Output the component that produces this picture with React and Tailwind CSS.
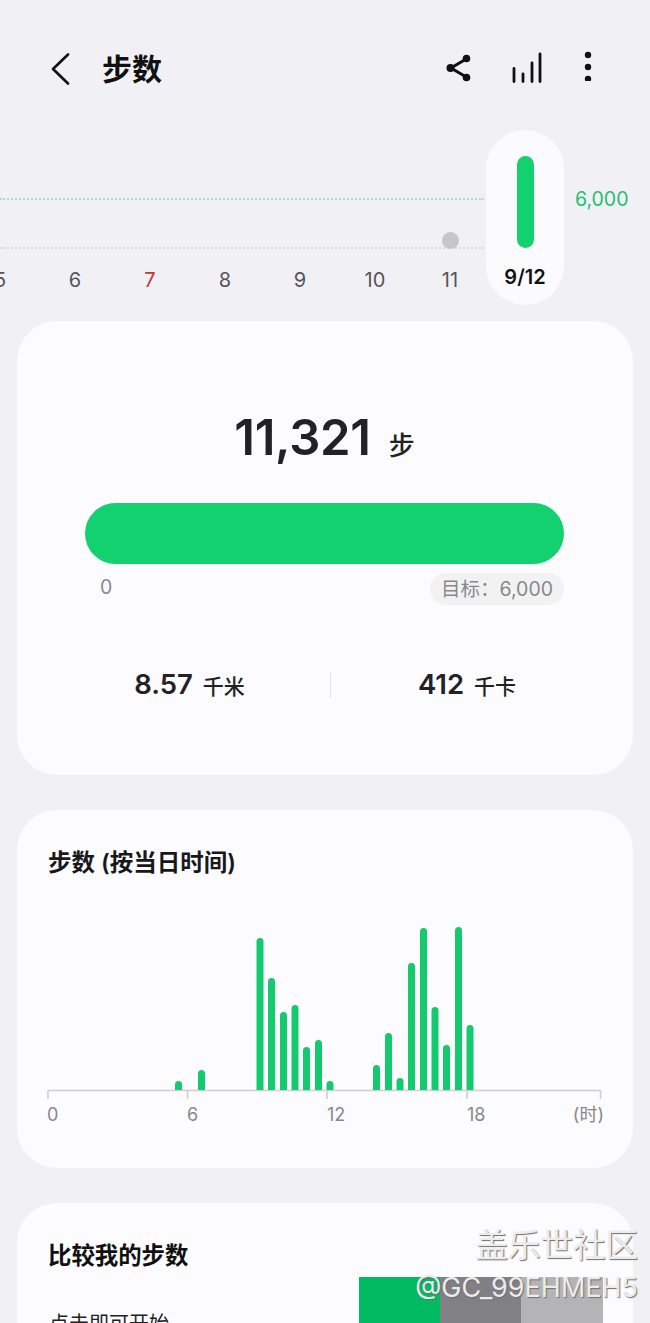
import React from "react";

const FONT = "font-['Inter','Noto_Sans_CJK_SC',sans-serif]";

// [center x, top y] in page pixels, baseline is y=1090
const BARS = [
  [178.5, 1081], [201.5, 1070], [260, 938], [271.5, 978], [283.5, 1012], [295, 1005],
  [306.5, 1047], [318.5, 1040], [330, 1081], [376.5, 1065], [388.5, 1033], [400, 1078],
  [411.5, 963], [423.5, 928], [435, 1007], [446.5, 1045], [458.5, 927], [470, 1025],
];

function Header() {
  return (
    <div className="flex h-[130px] items-start pl-[51px] pr-[58px] pt-[52px]">
      <svg width="19" height="32" viewBox="0 0 19 32" fill="none" className="mt-[1px]">
        <path d="M17 1.5 2 16l15 14.5" stroke="#111" strokeWidth="2.6" strokeLinecap="round" strokeLinejoin="round" />
      </svg>
      <div className="ml-[32px] mt-[-1px] text-[30px] leading-[36px] font-bold text-[#111]">步数</div>
      <div className="ml-auto flex items-start">
        <svg width="26" height="30" viewBox="0 0 26 30" fill="#111" stroke="#111" className="mt-[1px]">
          <path d="M21 5.5 5 15l16 9.5" fill="none" strokeWidth="3" />
          <circle cx="20.5" cy="5.5" r="3.8" stroke="none" />
          <circle cx="4.5" cy="15" r="4" stroke="none" />
          <circle cx="20.5" cy="24.5" r="3.8" stroke="none" />
        </svg>
        <svg width="31" height="32" viewBox="0 0 31 32" fill="none" stroke="#111" strokeWidth="2.8" strokeLinecap="round" className="ml-[39px]">
          <path d="M3 16.5v13M12 22v7.5M21 11v18.5M29 2v27.5" />
        </svg>
        <svg width="8" height="30" viewBox="0 0 8 30" fill="#111" className="ml-[42px] mt-[-1px]">
          <circle cx="4" cy="4" r="3.2" />
          <circle cx="4" cy="16" r="3.2" />
          <circle cx="4" cy="28" r="3.2" />
        </svg>
      </div>
    </div>
  );
}

function DayStrip() {
  const days = ["5", "6", "7", "8", "9", "10", "11"];
  return (
    <div className="relative flex h-[175px] items-end">
      <div className="absolute left-0 top-[68px] w-[484px] border-t-2 border-dotted border-[#a4e2c2]"></div>
      <div className="absolute left-0 top-[117px] w-[484px] border-t-2 border-dotted border-[#dcdce0]"></div>
      <div className="ml-[-37.5px] flex">
        {days.map((d) => (
          <div
            key={d}
            className={
              "relative w-[75px] pb-[13px] text-center text-[20px] leading-[24px] " +
              (d === "7" ? "text-[#c0392f]" : "text-[#55555a]")
            }
          >
            {d}
            {d === "11" && (
              <div className="absolute left-[29px] top-[-36px] h-[17px] w-[17px] rounded-full bg-[#c6c6ca]"></div>
            )}
          </div>
        ))}
      </div>
      <div className="ml-[-1.5px] flex h-[175px] w-[78px] flex-col items-center rounded-full bg-[#fbfbfe] pt-[26px]">
        <div className="h-[92px] w-[17px] rounded-full bg-[#13d16f]"></div>
        <div className="mt-[17px] text-[20px] leading-[24px] font-semibold text-[#111]">9/12</div>
      </div>
      <div className="ml-[11px] self-start pt-[57px] text-[19.5px] leading-[24px] text-[#1fbf72]">6,000</div>
    </div>
  );
}

function SummaryCard() {
  return (
    <div className="mx-[17px] mt-[16px] h-[454px] rounded-[40px] bg-[#fcfcff] pl-[68px] pr-[69px] pt-[88px]">
      <div className="flex items-baseline justify-center text-[#222226]">
        <span className="text-[49px] leading-[58px] font-semibold tracking-[-0.3px]">11,321</span>
        <span className="ml-[18px] text-[26px] font-medium">步</span>
      </div>
      <div className="mt-[36px] h-[61px] rounded-full bg-[#13d16f]"></div>
      <div className="mt-[9px] flex items-start justify-between text-[19.5px] text-[#88888c]">
        <span className="ml-[15px] mt-[2px] leading-[24px]">0</span>
        <span className="rounded-full bg-[#f2f2f3] px-[11px] py-[4px] leading-[24px]">目标：6,000</span>
      </div>
      <div className="mt-[62px] flex items-center text-[#222226]">
        <div className="flex w-[245px] items-baseline justify-center pr-[36px]">
          <span className="text-[27.5px] leading-[34px] font-semibold">8.57</span>
          <span className="ml-[10px] text-[21px] font-medium">千米</span>
        </div>
        <div className="h-[26px] w-px bg-[#e4e4e6]"></div>
        <div className="flex flex-1 items-baseline justify-center pl-[39px]">
          <span className="text-[27.5px] leading-[34px] font-semibold">412</span>
          <span className="ml-[10px] text-[21px] font-medium">千卡</span>
        </div>
      </div>
    </div>
  );
}

function HourlyCard() {
  const labels = ["0", "6", "12"];
  return (
    <div className="mx-[17px] mt-[35px] h-[358px] rounded-[40px] bg-[#fcfcff] px-[30px] pt-[37px]">
      <div className="ml-[1px] text-[23.5px] leading-[32px] font-semibold text-[#18181b]">步数 (按当日时间)</div>
      <svg width="556" height="180" viewBox="47 920 556 180" fill="none" className="mt-[41px] block">
        <path d="M48 1090.5h553M48 1090v9M187.5 1090v9M327 1090v9M467 1090v9M600.5 1090v9" stroke="#cfcfd1" strokeWidth="1.6" />
        {BARS.map(([x, top]) => (
          <path
            key={x}
            d={`M${x - 3.5} 1090V${top + 3.5}a3.5 3.5 0 0 1 7 0V1090z`}
            fill="#15c96e"
          />
        ))}
      </svg>
      <div className="mt-[3px] flex text-[18px] leading-[24px] text-[#88888c]">
        {labels.map((l) => (
          <span key={l} className="w-[140px] shrink-0">{l}</span>
        ))}
        <span>18</span>
        <span className="ml-auto mr-[-1px]">(时)</span>
      </div>
    </div>
  );
}

function CompareCard() {
  return (
    <div className="mx-[17px] mt-[35px] h-[200px] rounded-[40px] bg-[#fcfcff] pl-[32px] pr-[30px] pt-[37px]">
      <div className="ml-[-1px] text-[23.4px] leading-[32px] font-semibold text-[#111]">比较我的步数</div>
      <div className="mt-[5px] flex items-start justify-between">
        <div className="pt-[34px] text-[20px] leading-[26px] text-[#222]">点击即可开始</div>
        <div className="flex h-[80px]">
          <div className="w-[81px] bg-[#00bb62]"></div>
          <div className="w-[81px] bg-[#808085]"></div>
          <div className="w-[82px] bg-[#b4b4b6]"></div>
        </div>
      </div>
    </div>
  );
}

export default function App() {
  return (
    <div className={"relative h-[1323px] w-[650px] overflow-hidden bg-[#f1f1f5] " + FONT}>
      <Header />
      <DayStrip />
      <SummaryCard />
      <HourlyCard />
      <CompareCard />
      {/* watermark sits over the last card */}
      <div className="absolute right-[12px] top-[1226px] text-right text-[#ececec] [text-shadow:1px_1px_1px_#6f6f6f]">
        <div className="text-[32.5px] leading-[40px]">盖乐世社区</div>
        <div className="mt-[6px] text-[27px] leading-[32px]">@GC_99EHMEH5</div>
      </div>
    </div>
  );
}
